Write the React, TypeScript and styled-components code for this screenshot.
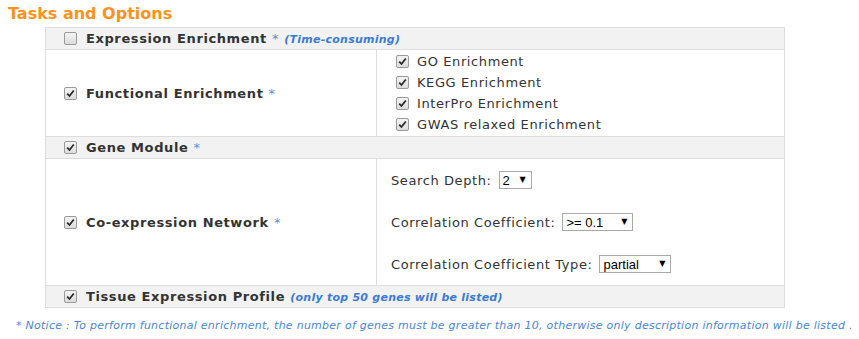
import styled, { createGlobalStyle } from "styled-components";

const GlobalStyle = createGlobalStyle`
  body {
    margin: 0;
    background: #fff;
    font-family: "DejaVu Sans", Verdana, sans-serif;
    color: #333;
  }
`;

const Page = styled.div`
  padding: 4px 0 0 8px;
`;

const Title = styled.h3`
  margin: 0;
  font-size: 16px;
  line-height: 19px;
  font-weight: 700;
  color: #f7931e;
`;

const Table = styled.table`
  margin: 4px 0 0 37px;
  width: 740px;
  border-collapse: collapse;
  font-size: 13px;
  line-height: 15px;
  letter-spacing: 0.6px;

  td {
    border: 1px solid #e0dcdc;
    padding: 0 0 0 18px;
    vertical-align: middle;
  }
`;

const HeadCell = styled.td`
  background: #f2f2f2;
  height: 21px;
`;

const LeftCell = styled.td`
  width: 312px;
`;

const RightCell = styled.td<{ $pad: string }>`
  && {
    padding: ${(p) => p.$pad};
  }
`;

const Label = styled.label`
  display: flex;
  align-items: center;
  gap: 9px;
  font-weight: 700;
  color: #333;
`;

const Star = styled.span`
  font-weight: 400;
  color: #5b8fd6;
`;

const Hint = styled.span`
  font-size: 11px;
  font-style: italic;
  font-weight: 700;
  letter-spacing: 0.25px;
  color: #3a7bd5;
`;

const SubList = styled.div`
  display: flex;
  flex-direction: column;
`;

const SubItem = styled.label`
  display: flex;
  align-items: center;
  gap: 8px;
  height: 21px;
  color: #333;
`;

const OptionLine = styled.div`
  display: flex;
  align-items: center;
  height: 42px;
  color: #333;
`;

const SelectWrap = styled.span`
  position: relative;
  display: inline-block;
  margin-left: 7px;
  letter-spacing: 0;
`;

const Select = styled.select<{ $w: number }>`
  appearance: none;
  width: ${(p) => p.$w}px;
  height: 18px;
  padding: 0 0 0 3px;
  border: 1px solid #a9a9a9;
  border-radius: 0;
  background: #fff;
  font-family: "Liberation Sans", Arial, sans-serif;
  font-size: 13px;
  color: #000;
  outline: none;
`;

const Arrow = styled.span`
  position: absolute;
  right: 6px;
  top: 4px;
  font-size: 8px;
  line-height: 10px;
  color: #000;
  pointer-events: none;
`;

const Box = styled.span`
  display: inline-flex;
  align-items: center;
  justify-content: center;
  width: 11px;
  height: 11px;
  border: 1px solid #9a9a9a;
  border-radius: 2px;
  background: linear-gradient(#f4f4f4, #dcdcdc);
  flex: none;
`;

const Notice = styled.p`
  margin: 11px 0 0 8px;
  font-size: 11px;
  font-style: italic;
  letter-spacing: 0.26px;
  white-space: nowrap;
  color: #4a86d8;
`;

const Check = ({ on }: { on: boolean }) => (
  <Box>
    {on && (
      <svg width="9" height="9" viewBox="0 0 9 9">
        <path d="M1.2 4.6 L3.5 7 L7.8 1.5" stroke="#2a2a2a" strokeWidth="1.8" fill="none" />
      </svg>
    )}
  </Box>
);

const Dropdown = ({ value, options, w }: { value: string; options: string[]; w: number }) => (
  <SelectWrap>
    <Select $w={w} defaultValue={value}>
      {options.map((o) => (
        <option key={o}>{o}</option>
      ))}
    </Select>
    <Arrow>▼</Arrow>
  </SelectWrap>
);

const App = () => (
  <Page>
    <GlobalStyle />
    <Title>Tasks and Options</Title>
    <Table>
      <tbody>
        <tr>
          <HeadCell colSpan={2}>
            <Label>
              <Check on={false} />
              <span>
                Expression Enrichment <Star>*</Star> <Hint>(Time-consuming)</Hint>
              </span>
            </Label>
          </HeadCell>
        </tr>
        <tr>
          <LeftCell>
            <Label>
              <Check on />
              <span>
                Functional Enrichment <Star>*</Star>
              </span>
            </Label>
          </LeftCell>
          <RightCell $pad="1px 0 1px 19px">
            <SubList>
              {["GO Enrichment", "KEGG Enrichment", "InterPro Enrichment", "GWAS relaxed Enrichment"].map((t) => (
                <SubItem key={t}>
                  <Check on />
                  {t}
                </SubItem>
              ))}
            </SubList>
          </RightCell>
        </tr>
        <tr>
          <HeadCell colSpan={2}>
            <Label>
              <Check on />
              <span>
                Gene Module <Star>*</Star>
              </span>
            </Label>
          </HeadCell>
        </tr>
        <tr>
          <LeftCell>
            <Label>
              <Check on />
              <span>
                Co-expression Network <Star>*</Star>
              </span>
            </Label>
          </LeftCell>
          <RightCell $pad="0 0 0 14px">
            <OptionLine>
              Search Depth:
              <Dropdown value="2" options={["1", "2", "3"]} w={33} />
            </OptionLine>
            <OptionLine>
              Correlation Coefficient:
              <Dropdown value=">= 0.1" options={[">= 0.1", ">= 0.3", ">= 0.5"]} w={71} />
            </OptionLine>
            <OptionLine>
              Correlation Coefficient Type:
              <Dropdown value="partial" options={["partial", "pearson"]} w={72} />
            </OptionLine>
          </RightCell>
        </tr>
        <tr>
          <HeadCell colSpan={2}>
            <Label>
              <Check on />
              <span>
                Tissue Expression Profile <Hint>(only top 50 genes will be listed)</Hint>
              </span>
            </Label>
          </HeadCell>
        </tr>
      </tbody>
    </Table>
    <Notice>
      * Notice : To perform functional enrichment, the number of genes must be greater than 10, otherwise only
      description information will be listed .
    </Notice>
  </Page>
);

export default App;
